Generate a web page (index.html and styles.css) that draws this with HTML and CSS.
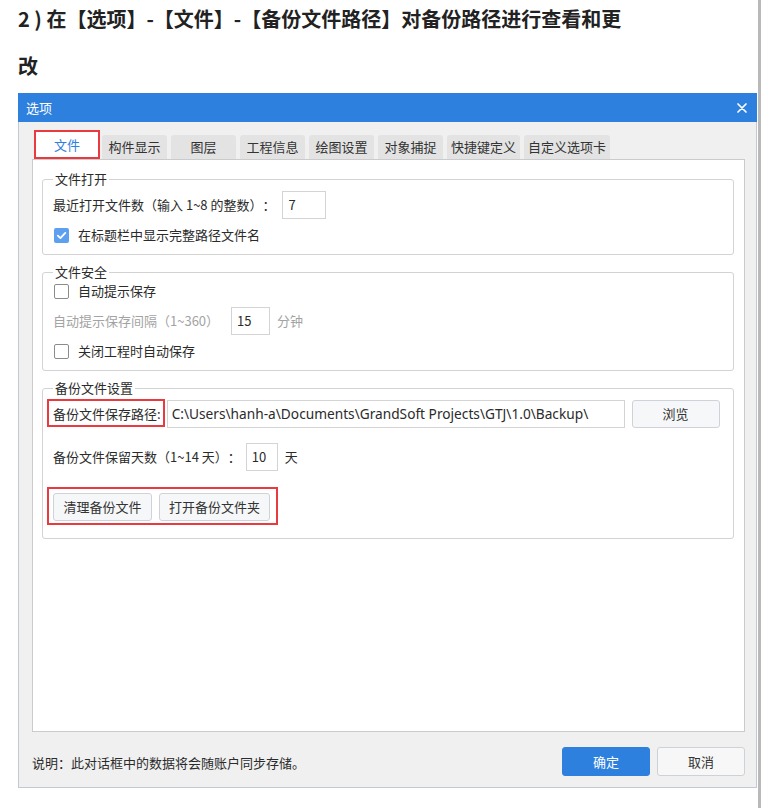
FILE: index.html
```html
<!DOCTYPE html>
<html lang="zh-CN">
<head>
<meta charset="utf-8">
<title>选项</title>
<link rel="stylesheet" href="styles.css">
</head>
<body>
<div class="edge-line"></div>
<h2 class="heading">2 ) 在【选项】-【文件】-【备份文件路径】对备份路径进行查看和更改</h2>

<div class="dialog">
  <div class="titlebar">
    <span class="title">选项</span>
    <svg class="close" width="10" height="10" viewBox="0 0 10 10"><path d="M1 1 L9 9 M9 1 L1 9" stroke="#fff" stroke-width="1.7" stroke-linecap="round"/></svg>
  </div>
  <div class="dialog-body">
    <div class="tabs">
      <div class="tab tab-active">文件</div>
      <div class="tab">构件显示</div>
      <div class="tab">图层</div>
      <div class="tab">工程信息</div>
      <div class="tab">绘图设置</div>
      <div class="tab">对象捕捉</div>
      <div class="tab">快捷键定义</div>
      <div class="tab">自定义选项卡</div>
    </div>
    <div class="panel">
      <fieldset class="group group-first">
        <legend>文件打开</legend>
        <div class="row row-input row-a">
          <span>最近打开文件数（输入 1~8 的整数）：</span>
          <span class="input input-7">7</span>
        </div>
        <div class="row row-check row-gap7">
          <span class="checkbox checked"><svg width="15" height="15" viewBox="0 0 15 15"><path d="M3.8 7.6 L6.4 10.1 L11.3 4.9" fill="none" stroke="#fff" stroke-width="1.8" stroke-linecap="round" stroke-linejoin="round"/></svg></span>
          <span>在标题栏中显示完整路径文件名</span>
        </div>
      </fieldset>

      <fieldset class="group">
        <legend>文件安全</legend>
        <div class="row row-check row-b">
          <span class="checkbox"></span>
          <span>自动提示保存</span>
        </div>
        <div class="row row-input row-gap7">
          <span class="muted">自动提示保存间隔（1~360）</span>
          <span class="input input-15">15</span>
          <span class="muted unit">分钟</span>
        </div>
        <div class="row row-check row-gap7">
          <span class="checkbox"></span>
          <span>关闭工程时自动保存</span>
        </div>
      </fieldset>

      <fieldset class="group group-last">
        <legend>备份文件设置</legend>
        <div class="row row-input row-a">
          <span class="path-label mark">备份文件保存路径:</span>
          <span class="input input-path">C:\Users\hanh-a\Documents\GrandSoft Projects\GTJ\1.0\Backup\</span>
          <span class="btn btn-browse">浏览</span>
        </div>
        <div class="row row-input row-gap15">
          <span>备份文件保留天数（1~14 天）：</span>
          <span class="input input-10">10</span>
          <span class="unit">天</span>
        </div>
        <div class="row row-input row-gap22">
          <div class="btn-group mark-group">
            <span class="btn">清理备份文件</span>
            <span class="btn">打开备份文件夹</span>
          </div>
        </div>
      </fieldset>
    </div>
    <div class="footer">
      <span class="note">说明：此对话框中的数据将会随账户同步存储。</span>
      <div class="footer-btns">
        <span class="btn btn-primary">确定</span>
        <span class="btn btn-cancel">取消</span>
      </div>
    </div>
  </div>
</div>
</body>
</html>
```

FILE: styles.css
```css
* { box-sizing: border-box; }

html, body {
  margin: 0;
  padding: 0;
  background: #ffffff;
}

body {
  font-family: "Noto Sans CJK SC", "Noto Sans", sans-serif;
  color: #2b2b2b;
  width: 762px;
  height: 808px;
  overflow: hidden;
  text-spacing-trim: space-all;
}

.edge-line {
  position: fixed;
  top: 0;
  left: 758px;
  width: 3px;
  height: 808px;
  background: #b9b9b9;
}

.heading {
  margin: -5px 0 0 0;
  padding-left: 18px;
  width: 632px;
  font-size: 20px;
  font-weight: 700;
  line-height: 47px;
  color: #222;
}

.dialog {
  margin: 4px 0 0 18px;
  width: 739px;
  background: #f0f0f0;
  border: 1px solid #c3c9d3;
  border-top: none;
}

.titlebar {
  height: 29px;
  background: #2e80de;
  display: flex;
  align-items: center;
  justify-content: space-between;
  padding: 0 10px 0 8px;
  margin: 0 -1px;
}

.title {
  color: #fff;
  font-size: 13px;
  line-height: 18px;
}

.close {
  display: block;
  margin-top: 1px;
}

.dialog-body {
  padding: 8px 11px 11px 13px;
}

.tabs {
  display: flex;
  align-items: flex-end;
  gap: 4px;
  padding-left: 2px;
  height: 29px;
}

.tab {
  height: 24px;
  min-width: 65px;
  padding: 0 4px;
  background: #e3e3e3;
  border-radius: 3px 3px 0 0;
  font-size: 13px;
  line-height: 24px;
  text-align: center;
  color: #333;
  white-space: nowrap;
}

.tab-active {
  position: relative;
  width: 66px;
  height: 29px;
  line-height: 29px;
  background: #fff;
  color: #2e80de;
  border-radius: 0;
  margin-right: -2px;
}

.tab-active::after {
  content: "";
  position: absolute;
  inset: 0;
  border: 2px solid #e83a3f;
}

.panel {
  height: 573px;
  background: #fff;
  border: 1px solid #cbcbcb;
  padding: 0 10px 0 9px;
}

.group {
  margin: 8px 0 0 0;
  padding: 0 10px;
  border: 1px solid #d3d3d3;
  border-radius: 3px;
  font-size: 13px;
}

.group-first { margin-top: 10px; padding-bottom: 10px; }
.group:not(.group-first):not(.group-last) { padding-bottom: 10px; }
.group-last { padding-bottom: 17px; }

.group legend {
  padding: 0 2px;
  font-size: 13px;
  line-height: 18px;
  color: #2b2b2b;
}

.row {
  display: flex;
  align-items: center;
  font-size: 13px;
  line-height: 18px;
  white-space: nowrap;
}

.row-input { height: 28px; }
.row-check { height: 18px; }

.row-a { margin-top: 3px; }
.row-b { margin-top: 1px; }
.row-gap7 { margin-top: 7px; }
.row-gap15 { margin-top: 15px; }
.row-gap22 { margin-top: 22px; }

.muted { color: #a3a3a3; }

.unit { margin-left: 7px; }

.input {
  height: 28px;
  border: 1px solid #d4d4d4;
  background: #fff;
  padding: 0 4px;
  line-height: 26px;
  color: #2b2b2b;
  font-size: 13px;
}

.input-7 { width: 44px; margin-left: 7px; padding-left: 5px; }
.input-15 { width: 39px; margin-left: 12px; padding-left: 5px; }
.input-10 { width: 32px; margin-left: 5px; padding-left: 5px; }
.input-path {
  flex: 0 0 458px;
  margin-left: 6px;
  padding-left: 4px;
  font-family: "Noto Sans", sans-serif;
  font-size: 13.7px;
  white-space: nowrap;
  overflow: hidden;
}

.checkbox {
  width: 15px;
  height: 15px;
  margin-left: 1px;
  margin-right: 9px;
  border: 1px solid #8c8c8c;
  border-radius: 2px;
  background: #fff;
  flex: 0 0 auto;
}

.checkbox svg { display: block; }

.checkbox.checked {
  border: none;
  background: #5ea0f0;
}

.btn {
  display: inline-flex;
  align-items: center;
  justify-content: center;
  height: 28px;
  padding: 0;
  border: 1px solid #cfd3d9;
  border-radius: 3px;
  background: #f6f7f9;
  font-size: 13px;
  color: #333;
  white-space: nowrap;
}

.btn-browse {
  width: 88px;
  margin-left: 7px;
}

.btn-group {
  display: flex;
  gap: 7px;
}

.btn-group .btn:first-child { width: 99px; }
.btn-group .btn:last-child { width: 111px; }

.mark, .mark-group { position: relative; }

.mark::after {
  content: "";
  position: absolute;
  left: -6px;
  right: -4px;
  top: -6px;
  bottom: -4px;
  border: 2px solid #e83a3f;
}

.mark-group::after {
  content: "";
  position: absolute;
  left: -6px;
  right: -8px;
  top: -6px;
  bottom: -4px;
  border: 2px solid #e83a3f;
}

.footer {
  margin-top: 15px;
  height: 29px;
  display: flex;
  align-items: center;
  justify-content: space-between;
}

.note {
  font-size: 13px;
  color: #2b2b2b;
  margin-top: 2px;
}

.footer-btns {
  display: flex;
  gap: 7px;
}

.footer-btns .btn {
  width: 88px;
  height: 29px;
}

.btn-primary {
  background: #2e80de;
  border-color: #2e80de;
  color: #fff;
}

.btn-cancel {
  background: #f7f7f7;
  border-color: #cdd2d8;
}
```
